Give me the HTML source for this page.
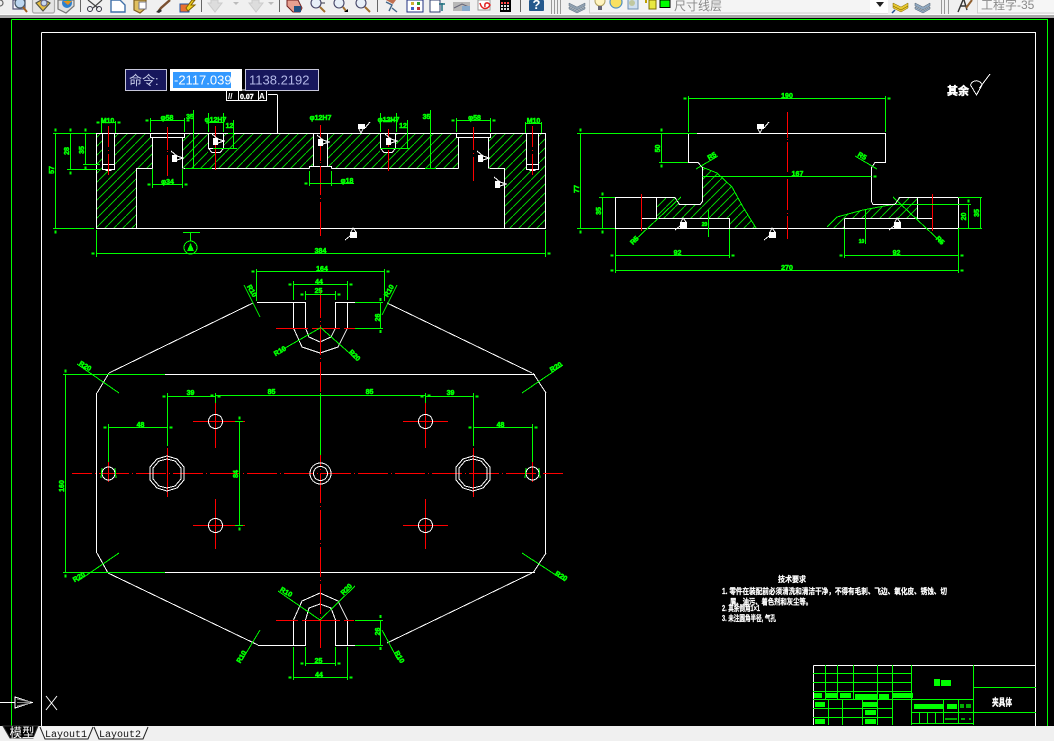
<!DOCTYPE html>
<html><head><meta charset="utf-8"><title>CAD</title>
<style>
html,body{margin:0;padding:0;background:#000;width:1054px;height:741px;overflow:hidden}
svg{display:block}
text{font-family:"Liberation Sans","Noto Sans CJK SC",sans-serif}
.t{fill:#0f0;font-size:7px;font-weight:bold;stroke:#0f0;stroke-width:.55;text-anchor:middle}
.g{stroke:#0f0;fill:none}
.w{stroke:#fff;fill:none}
.r{stroke:#f00;fill:none}
.n{fill:#fff;font-weight:bold;stroke:#fff;stroke-width:.25;font-size:8px}
</style></head><body>
<svg xmlns="http://www.w3.org/2000/svg" width="1054" height="741" viewBox="0 0 1054 741">
<defs>
<pattern id="h" patternUnits="userSpaceOnUse" width="9" height="9"><path d="M0 9L9 0" stroke="#00c800" stroke-width="1" shape-rendering="crispEdges"/></pattern>
<marker id="m" markerUnits="userSpaceOnUse" markerWidth="8" markerHeight="4" refX="0" refY="2" orient="auto-start-reverse"><rect x="2" y="1" width="3" height="2" fill="#0f0"/></marker>
<g id="r1" shape-rendering="crispEdges"><rect x="-2" y="-3" width="5" height="7" fill="#fff"/><path d="M-3-7L3-2L9 0L3 2" fill="none" stroke="#fff"/></g>
<g id="r2" shape-rendering="crispEdges"><rect x="-3" y="-3" width="7" height="5" fill="#fff"/><path d="M-2 2L0 6L2 2M4 1L9-5" fill="none" stroke="#fff"/></g>
<g id="r3" shape-rendering="crispEdges"><rect x="-3" y="-3" width="7" height="6" fill="#fff"/><path d="M-2-3L0-7L3-3M-3 1L-8 5" fill="none" stroke="#fff"/></g>
</defs>
<rect width="1054" height="741" fill="#000"/>

<!-- toolbar -->
<rect width="1054" height="15" fill="#f0f0f0"/>
<rect y="14" width="1054" height="1" fill="#fafafa"/>
<rect y="15" width="1054" height="3" fill="#a8a8a8"/>
<g fill="none" stroke-width="1.2">
<circle cx="0" cy="3" r="3" stroke="#666"/>
<path d="M13 0h12v9h-12z" fill="#f8f8ff" stroke="#557"/><circle cx="20" cy="3" r="5" fill="#bcd6f0" stroke="#456"/><path d="M23 7l4 5" stroke="#a06020" stroke-width="2"/>
<rect x="32.5" y="-2" width="22" height="15" rx="2" fill="#e4e4e4" stroke="#aaa"/><path d="M36 3l7-4 7 4-7 8z" fill="#e8c040" stroke="#554"/><circle cx="44" cy="3" r="3" fill="#c8d8f0" stroke="#668"/>
<path d="M58 0h16v6l-8 7-8-4z" fill="#e0e0e0" stroke="#777"/><circle cx="67" cy="3" r="5" fill="#2a80d0"/><path d="M63 1l5 4 4-4" fill="#e09020"/><circle cx="68" cy="-1" r="2" fill="#40b040"/>
</g>
<g shape-rendering="crispEdges"><rect x="80" y="0" width="1" height="12" fill="#666"/><rect x="201" y="0" width="1" height="12" fill="#666"/><rect x="279" y="0" width="1" height="12" fill="#666"/><rect x="377" y="0" width="1" height="12" fill="#666"/><rect x="520" y="0" width="1" height="12" fill="#666"/></g>
<path d="M88 0l10 8M102 0l-9 8" stroke="#444" fill="none" stroke-width="1.2"/><circle cx="90" cy="9" r="2.5" fill="none" stroke="#334"/><circle cx="99" cy="9" r="2.5" fill="none" stroke="#334"/>
<path d="M111 0h9l5 5v7h-14z" fill="#fff" stroke="#4070a8" stroke-width="1.4"/>
<path d="M134 0h12v8l-6 5-6-3z" fill="#e0c060" stroke="#806020" stroke-width="1.2"/><path d="M139 2h7v7h-7z" fill="#fff" stroke="#778"/>
<path d="M158 12l3-4 9-8" stroke="#7a5030" stroke-width="2.4" fill="none"/><path d="M156 12l4-3 2 2-3 2z" fill="#333"/>
<rect x="180" y="4" width="9" height="8" fill="#e87030" stroke="#2050a0"/><path d="M186 8l6-8h3l-4 5h4l-7 6z" fill="#f0d020" stroke="#806000"/>
<path d="M211 0h7v3h4l-7 9-7-9h3z" fill="#ddd" stroke="#ccc"/><path d="M233 2h6l-3 3z" fill="#bbb"/><path d="M252 0h7v3h4l-7 9-7-9h3z" fill="#ddd" stroke="#ccc"/><path d="M268 2h6l-3 3z" fill="#bbb"/>
<path d="M287 0h11l4 8-2 4h-7l-6-6z" fill="#e8a090" stroke="#702020"/><rect x="294" y="6" width="7" height="6" fill="#205080"/>
<g fill="#e8f0f8" stroke="#446" stroke-width="1.1">
<circle cx="316" cy="3" r="5"/><circle cx="339" cy="3" r="5"/><circle cx="361" cy="3" r="5"/>
</g>
<path d="M320 7l5 5M343 7l3 4M365 7l5 5" stroke="#a07030" stroke-width="2"/><path d="M344 12h4v-3z" fill="#000"/><path d="M321 3h4" stroke="#334"/>
<path d="M386 2l6 3-3 6M392 8l5 4" stroke="#468" fill="none" stroke-width="1.4"/><path d="M386 0h10l-3 4z" fill="#c07050"/>
<rect x="407" y="0" width="16" height="12" fill="#fff" stroke="#203080"/><rect x="411" y="2" width="3" height="3" fill="#d0b030"/><rect x="417" y="2" width="3" height="3" fill="#30a030"/><rect x="411" y="7" width="3" height="3" fill="#4060c0"/><rect x="417" y="7" width="3" height="3" fill="#c03030"/>
<rect x="430" y="0" width="10" height="12" fill="#fff" stroke="#304070"/><path d="M442 3v8M439 4h6" stroke="#207080" fill="none" stroke-width="1.5"/>
<rect x="453" y="2" width="17" height="9" fill="#b8b8b8"/><path d="M454 8l8-4 7 3" stroke="#667" fill="none"/><rect x="462" y="6" width="8" height="5" fill="#88aacc"/>
<path d="M478 0h12v10h-12z" fill="#fff" stroke="#999"/><path d="M480 3c2 8 8 6 10 2-2-3-6-3-5 2" stroke="#e02020" fill="none" stroke-width="1.5"/>
<rect x="500" y="0" width="11" height="12" fill="#000"/><g fill="#f44" shape-rendering="crispEdges"><rect x="501" y="2" width="2" height="2"/><rect x="504" y="2" width="2" height="2"/><rect x="507" y="2" width="2" height="2"/></g><g fill="#ddd" shape-rendering="crispEdges"><rect x="501" y="5" width="2" height="2"/><rect x="504" y="5" width="2" height="2"/><rect x="507" y="5" width="2" height="2"/><rect x="501" y="8" width="2" height="2"/><rect x="504" y="8" width="2" height="2"/><rect x="507" y="8" width="2" height="2"/></g>
<rect x="529" y="0" width="15" height="11" rx="1" fill="#24588c"/><text x="536.5" y="9" font-size="13" font-weight="bold" fill="#fff" text-anchor="middle">?</text>
<path d="M551.5 0v14M554.5 0v14M557.5 0v14M560.5 0v14" stroke="#999" shape-rendering="crispEdges"/>
<path d="M569 3l8 4 8-4v3l-8 4-8-4zM569 7l8 4 8-4v2l-8 4-8-4z" fill="#90a0b0" stroke="#607080" stroke-width=".5"/>
<rect x="589.5" y="-2" width="298" height="15" fill="#f4f4f4" stroke="#d0d0d0"/>
<rect x="870" y="0" width="18" height="13" fill="#fff"/>
<path d="M876 2h8l-4 5z" fill="#222"/>
<circle cx="600" cy="1" r="5" fill="#fff4c0" stroke="#b0a060"/><rect x="598" y="6" width="4" height="4" fill="#667"/>
<circle cx="616" cy="2" r="6" fill="#f8e060" stroke="#5090c0" stroke-width="1.2"/>
<rect x="628" y="-1" width="10" height="10" fill="#d0e0f0" stroke="#7090b0"/><circle cx="632" cy="3" r="3" fill="#c0c8a0"/>
<path d="M645 0h2v3h-2z" fill="#c0a000"/><rect x="649" y="0" width="7" height="9" fill="#e8e840" stroke="#807000"/>
<rect x="660" y="0" width="10" height="7.5" fill="#0f0" stroke="#000"/>
<text x="674" y="10" font-size="12" fill="#8a8a8a" letter-spacing="0">尺寸线层</text>
<path d="M893 3l8 4 7-4v3l-7 4-8-4zM893 6l8 4 7-4v2l-7 4-8-4z" fill="#e8c830" stroke="#806800" stroke-width=".5"/><path d="M892 13l3-3" stroke="#205090" stroke-width="1.5"/>
<path d="M915 3l8 4 7-4v3l-7 4-8-4zM915 7l8 4 7-4v2l-7 4-8-4z" fill="#90a8c0" stroke="#506070" stroke-width=".5"/>
<path d="M941.5 0v14M944.5 0v14M948.5 0v14" stroke="#999" shape-rendering="crispEdges"/>
<rect x="977.5" y="-2" width="77" height="15" fill="#f6f6f6" stroke="#d0d0d0"/>
<path d="M958 12l5-12M964 0l3 10M960 6h6" stroke="#333" stroke-width="1.4" fill="none"/><path d="M966 8l6-8" stroke="#906030" stroke-width="2"/>
<text x="981" y="9" font-size="12" fill="#8a8a8a">工程字-35</text>

<g shape-rendering="crispEdges" stroke-width="1">
<path class="g" d="M11.5 19.5H1047.5V726M11.5 19.5V726"/>
<path class="w" d="M41.5 32.5H1035.5V726M41.5 32.5V726"/>

<!-- FRONT VIEW -->
<path fill="url(#h)" d="M97 133H546V228H504V168H489V137H491V133H456V137H458V168H332V166H328V133H313V166H309V168H183V137H185V133H150V137H152V168H136V228H97Z"/>
<g fill="#000"><rect x="102" y="133" width="13" height="37"/><rect x="526" y="133" width="13" height="37"/><rect x="208" y="133" width="16" height="20"/><rect x="380" y="133" width="16" height="20"/></g>
<path class="w" d="M96.5 133.5H545.5V228.5H96.5ZM136.5 228.5V168.5H152.5M183.5 168.5H309.5M331.5 168.5H458.5M489.5 168.5H504.5V228.5M102.5 133.5V164.5H114.5V133.5M102.5 164.5V169.5H114.5V164.5M105.5 170.5H111.5M526.5 133.5V164.5H538.5V133.5M526.5 164.5V169.5H538.5V164.5M529.5 170.5H535.5M150.5 133.5V137.5H184.5V133.5M152.5 137.5V168.5M182.5 137.5V168.5M456.5 133.5V137.5H490.5V133.5M458.5 137.5V168.5M488.5 137.5V168.5M208.5 133.5V148.5H223.5V133.5M380.5 133.5V148.5H395.5V133.5M313.5 133.5V166.5H327.5V133.5M309.5 168.5V166.5H331.5V168.5"/>
<path class="w" d="M208.5 148.5L212 152.5H220L223.5 148.5M380.5 148.5L384 152.5H392L395.5 148.5M277.5 95V133M268 94.5H277.5"/>
<path class="r" d="M108.5 126V147M108.5 150V151M108.5 154V175M167.5 127V150M167.5 151V152M167.5 155V176M215.5 126V148M215.5 149V170M320.5 125V161M320.5 162V163M320.5 166V195M320.5 198V199M320.5 202V236M388.5 129V147M388.5 150V171M473.5 127V150M473.5 153V154M473.5 157V181M532.5 126V147M532.5 150V151M532.5 154V175"/>
<g class="g">
<path d="M53 133.5H96M53 228.5H94M67 169.5H100M83 164.5H100M55.5 134V228" />
<path d="M55.5 133.5V228.5" marker-start="url(#m)" marker-end="url(#m)"/>
<path d="M70.5 133.5V169.5" marker-start="url(#m)" marker-end="url(#m)"/>
<path d="M85.5 133.5V164.5" marker-start="url(#m)" marker-end="url(#m)"/>
<path d="M101.5 122.5H115.5" marker-start="url(#m)" marker-end="url(#m)"/><path d="M101.5 121V133M115.5 121V133"/>
<path d="M150.5 120.5H184.5" marker-start="url(#m)" marker-end="url(#m)"/><path d="M150.5 118V132M184.5 118V132"/>
<path d="M193.5 110V168M185 168.5H212"/>
<path d="M208.5 122.5H223.5"/><path d="M208.5 113V132M223.5 113V132"/>
<path d="M233.5 120V148M213 148.5H237M228 133.5H233"/>
<path d="M152.5 184.5H182.5" marker-start="url(#m)" marker-end="url(#m)"/><path d="M152.5 169V188M182.5 169V188"/>
<path d="M309.5 183.5H354" marker-start="url(#m)"/><path d="M309.5 171V186M331.5 171V186"/>
<path d="M380.5 120.5H396.5"/><path d="M380.5 113V132M396.5 113V132"/>
<path d="M407.5 120V148M380 148.5H410"/>
<path d="M430.5 110V168M425 168.5H436"/>
<path d="M456.5 120.5H490.5" marker-start="url(#m)" marker-end="url(#m)"/><path d="M456.5 118V132M490.5 118V132"/>
<path d="M525.5 123.5H541.5"/><path d="M525.5 122V133M541.5 122V133"/>
<path d="M96.5 253.5H545.5" marker-start="url(#m)" marker-end="url(#m)"/><path d="M96.5 230V257M545.5 230V257"/>
<path d="M183 232.5H200M190.5 232V241"/>
<circle cx="190.5" cy="247.5" r="6.5"/>
</g>
<path d="M190.5 243L194 251H187Z" fill="#0f0" stroke="none"/>
<!-- tolerance box -->
<path class="w" d="M226.5 90V100.5H266.5V90M238.5 90V100.5M258.5 90V100.5M240 90H268"/>

<!-- SIDE VIEW -->
<path fill="url(#h)" d="M702 167L717 173L732 187L743 207L756 228H729V218H656V197H675L679 204H700L702 201Z"/>
<path fill="url(#h)" d="M827 227L837 217L863 210L895 204L899 197H917V218H844V228H830Z"/>
<path class="g" d="M702 167L717 173L732 187L743 207L756 228M827 227L837 217L863 210L895 204"/>
<path class="w" d="M688.5 133.5H885.5V162.5H875L871.5 167.5V201.5L873 204.5H895L899.5 197.5H958.5V228.5H615.5V197.5H675L679.5 204.5H700L702.5 201.5V167.5L698 162.5H688.5V133.5M656.5 197.5V218.5M641 218.5H729.5V228M917.5 197.5V218.5M844.5 218.5H932.5M844.5 218.5V228"/>
<path class="r" d="M787.5 112V138M787.5 139V140M787.5 142V172M787.5 179V210M787.5 213V214M787.5 216V239M641.5 194V231M932.5 194V231"/>
<g class="g">
<path d="M688.5 98.5H885.5" marker-start="url(#m)" marker-end="url(#m)"/><path d="M688.5 96V132M885.5 96V132"/>
<path d="M577 133.5H697M577 228.5H615M659 162.5H688M599 197.5H615"/>
<path d="M580.5 133.5V228.5" marker-start="url(#m)" marker-end="url(#m)"/>
<path d="M661.5 133.5V162.5" marker-start="url(#m)" marker-end="url(#m)"/>
<path d="M702.5 176.5H871.5" marker-end="url(#m)"/>
<path d="M602.5 197.5V228.5" marker-start="url(#m)" marker-end="url(#m)"/>
<path d="M895 204.5H971M958 197.5H982M958 228.5H982"/>
<path d="M968.5 204.5V228.5" marker-start="url(#m)"/>
<path d="M980.5 197.5V228.5"/>
<path d="M615.5 255.5H729.5" marker-start="url(#m)" marker-end="url(#m)"/>
<path d="M844.5 255.5H958.5" marker-start="url(#m)" marker-end="url(#m)"/>
<path d="M615.5 270.5H958.5" marker-start="url(#m)" marker-end="url(#m)"/>
<path d="M615.5 229V273M729.5 229V258M844.5 229V258M958.5 229V273"/>
<path d="M708.5 210V237M865.5 210V244"/>
<path d="M718 156L696 169M855 156L877 169M634 241L681 197M942 243L893 197"/>
</g>

<!-- PLAN VIEW -->
<path class="w" d="M165 374.5H535M165 572.5H535M96.5 393V553M545.5 393V553"/>
<path class="w" d="M109 373L97 393M533 373L546 393M97 553L108 573M546 553L533 573"/>
<path class="w" d="M109 373L253 303M387 303L532 373M108 573L258 645M387 643L532 573"/>
<path class="w" d="M257 302.5H305.5V328L309 337L320 342L331 337L335.5 328V302.5H355M293.5 302.5V328L302 347L320 353L338 347L347.5 328V302.5"/>
<path class="w" d="M258 645.5H305.5V620L309 608L320 604L331 608L335.5 620V645.5H355M293.5 645.5V620L302 601L320 593L338 601L347.5 620V645.5"/>
<path class="r" d="M320.5 290V648" stroke-dasharray="30 3 1 3" stroke-dashoffset="2"/>
<path class="r" d="M72 473.5H563" stroke-dasharray="30 3 1 3" stroke-dashoffset="10"/>
<path class="r" d="M276 328.5H308M312 328.5H340M344 328.5H355M276 620.5H298M302 620.5H340M344 620.5H354"/>
<path class="r" d="M193 421.5H245M215.5 403V448M403 421.5H448M425.5 403V448M193 525.5H245M215.5 499V549M403 525.5H448M425.5 499V549M108.5 462V482M532.5 462V482M167.5 448V497M473.5 448V497"/>
<g class="w">
<circle cx="108.5" cy="473.5" r="6.5"/><circle cx="532.5" cy="473.5" r="6.5"/>
<circle cx="215.5" cy="421.5" r="7"/><circle cx="425.5" cy="421.5" r="7"/><circle cx="215.5" cy="525.5" r="7"/><circle cx="425.5" cy="525.5" r="7"/>
<circle cx="320.5" cy="473.5" r="10.5"/><circle cx="320.5" cy="473.5" r="7"/>
<path d="M167 456L177 459L184 467V480L177 488L167 491L157 488L150 480V467L157 459Z"/><path d="M167 459L175 461L181 468V479L175 486L167 488L159 486L153 479V468L159 461Z"/>
<path d="M473 456L483 459L490 467V480L483 488L473 491L463 488L456 480V467L463 459Z"/><path d="M473 459L481 461L487 468V479L481 486L473 488L465 486L459 479V468L465 461Z"/>
</g>
<g class="g">
<path d="M102 468L101 478M115 468L116 478M526 468L525 478M539 468L540 478"/>
<path d="M63 374.5H165M63 572.5H165"/>
<path d="M65.5 374.5V572.5" marker-start="url(#m)" marker-end="url(#m)"/>
<path d="M167.5 396.5H215.5" marker-start="url(#m)" marker-end="url(#m)"/>
<path d="M215.5 395.5H425.5" marker-start="url(#m)" marker-end="url(#m)"/>
<path d="M425.5 396.5H473.5" marker-start="url(#m)" marker-end="url(#m)"/>
<path d="M167.5 393V446M215.5 393V403M320.5 393V455M425.5 393V403M473.5 393V446"/>
<path d="M108.5 427.5H167.5" marker-start="url(#m)" marker-end="url(#m)"/>
<path d="M473.5 427.5H532.5" marker-start="url(#m)" marker-end="url(#m)"/>
<path d="M108.5 424V462M532.5 424V462"/>
<path d="M239.5 421.5V525.5" marker-start="url(#m)" marker-end="url(#m)"/><path d="M235 421.5H243M235 525.5H243"/>
<path d="M256.5 271.5H384.5" marker-start="url(#m)" marker-end="url(#m)"/><path d="M256.5 269V301M384.5 269V301"/>
<path d="M293.5 284.5H347.5" marker-start="url(#m)" marker-end="url(#m)"/><path d="M293.5 281V300M347.5 281V300"/>
<path d="M305.5 294.5H335.5" marker-start="url(#m)" marker-end="url(#m)"/><path d="M305.5 291V300M335.5 291V300"/>
<path d="M380.5 303V328" marker-start="url(#m)" marker-end="url(#m)"/><path d="M355 302.5H383M355 328.5H383"/>
<path d="M244 285L260 317M397 285L382 315M280 351L320 328M320 327L355 358M77 364L119 393M563 365L522 393M78 581L119 553M565 581L522 553M355 586L320 620M278 591L320 620M382 630L398 660M260 630L242 660"/>
<path d="M380.5 620V645" marker-start="url(#m)" marker-end="url(#m)"/><path d="M355 620.5H383M355 645.5H383"/>
<path d="M305.5 663.5H335.5" marker-start="url(#m)" marker-end="url(#m)"/><path d="M305.5 647V666M335.5 647V666"/>
<path d="M293.5 677.5H347.5" marker-start="url(#m)" marker-end="url(#m)"/><path d="M293.5 647V680M347.5 647V680"/>
</g>

<!-- TITLE BLOCK -->
<path class="w" d="M813.5 665.5H1035.5M813.5 665.5V725"/>
<path class="g" d="M813 673.5H911M813 682.5H911M813 691.5H911M813 699.5H973M813 708.5H892M813 717.5H892M825.5 665V699M837.5 665V699M853.5 665V699M877.5 665V725M892.5 665V725M911.5 665V725M828.5 699V725M842.5 699V725M862.5 699V725M973.5 665V725M973 687.5H1036M911 712.5H1036M911 723.5H973M943.5 699V723M958.5 699V723M919.5 712V723M927.5 712V723M935.5 712V723"/>
<g fill="#0f0">
<rect x="814" y="693" width="8" height="5"/><rect x="826" y="693" width="11" height="5"/><rect x="840" y="693" width="11" height="5"/><rect x="855" y="694" width="22" height="5"/><rect x="879" y="694" width="10" height="5"/><rect x="893" y="693" width="20" height="5"/>
<rect x="815" y="702" width="10" height="5"/><rect x="862" y="702" width="15" height="5"/><rect x="865" y="710" width="11" height="5"/><rect x="815" y="719" width="10" height="5"/><rect x="865" y="719" width="11" height="5"/>
<rect x="914" y="704" width="29" height="5"/><rect x="947" y="704" width="10" height="5"/>
<rect x="934" y="679" width="6" height="7"/><rect x="941" y="680" width="10" height="6"/>
</g>
<g fill="#0a0"><rect x="960" y="704" width="4" height="4"/><rect x="966" y="704" width="5" height="4"/><rect x="945" y="718" width="12" height="2"/><rect x="961" y="718" width="4" height="2"/><rect x="969" y="718" width="2" height="2"/></g>
</g>

<!-- rough symbols -->
<use href="#r1" x="174" y="158"/><use href="#r1" x="215" y="141"/><use href="#r1" x="320" y="142"/><use href="#r1" x="388" y="141"/><use href="#r1" x="480" y="158"/><use href="#r1" x="497" y="184"/>
<use href="#r2" x="361" y="127"/><use href="#r3" x="353" y="235"/>
<use href="#r2" x="760" y="127"/><use href="#r3" x="683" y="225"/><use href="#r3" x="772" y="235"/><use href="#r3" x="897" y="225"/>
<path d="M970.5 85L976.5 95L982 85A6 6 0 0 0 970.5 85ZM979.5 88L990 74" fill="none" stroke="#fff" stroke-width="1" shape-rendering="crispEdges"/>
<text x="947" y="94.5" font-size="11" font-weight="bold" fill="#fff" stroke="#fff" stroke-width=".5" textLength="22" lengthAdjust="spacingAndGlyphs">其余</text>

<!-- dim labels -->
<g class="t">
<text x="107.5" y="123">M10</text>
<text x="167" y="120">φ58</text><text x="474.5" y="120">φ58</text>
<text x="215.5" y="122">φ12H7</text><text x="388.5" y="122">φ12H7</text><text x="320.5" y="120">φ12H7</text>
<text x="533.5" y="123">M10</text>
<text x="167.5" y="184">φ34</text><text x="347" y="183">φ18</text>
<text x="320.5" y="253">384</text>
<text transform="translate(54,170) rotate(-90)">57</text>
<text transform="translate(69,151) rotate(-90)">28</text>
<text transform="translate(84,150) rotate(-90)">35</text>
<text x="190" y="119">35</text>
<text x="229.5" y="128">12</text>
<text x="403" y="128">12</text>
<text x="426.5" y="119">35</text>
<text x="787" y="98">190</text><text x="797.5" y="176">167</text>
<text transform="translate(579,189) rotate(-90)">77</text>
<text transform="translate(660,148.5) rotate(-90)">50</text>
<text transform="translate(601,211) rotate(-90)">35</text>
<text transform="translate(966,216.5) rotate(-90)">20</text>
<text transform="translate(979,213) rotate(-90)">35</text>
<text x="677.5" y="255">92</text><text x="896.5" y="255">92</text><text x="787" y="270">270</text>
<text x="704.5" y="226" style="font-size:5px">20</text><text x="861.5" y="243" style="font-size:5px">10</text>
<text transform="translate(713,158) rotate(-30)">R5</text><text transform="translate(861,158) rotate(30)">R5</text>
<text transform="translate(636,242) rotate(-45)">R5</text><text transform="translate(938.5,242) rotate(45)">R5</text>
<text x="322" y="271">164</text><text x="319" y="284">44</text><text x="318.5" y="293">25</text>
<text transform="translate(250,292) rotate(60)">R10</text><text transform="translate(391,292) rotate(-60)">R10</text>
<text transform="translate(281,353) rotate(-30)">R10</text><text transform="translate(353,357) rotate(45)">R20</text>
<text transform="translate(84,368) rotate(30)">R20</text><text transform="translate(557,369) rotate(-30)">R20</text>
<text transform="translate(80,579) rotate(-30)">R20</text><text transform="translate(560,578) rotate(30)">R20</text>
<text x="190.5" y="395">39</text><text x="271.5" y="394">85</text><text x="369.5" y="394">85</text><text x="450.5" y="395">39</text>
<text x="140.5" y="427">48</text><text x="500.5" y="427">48</text>
<text transform="translate(64,486) rotate(-90)">160</text>
<text transform="translate(238,474) rotate(-90)">84</text>
<text transform="translate(380,317.5) rotate(-90)">26</text>
<text transform="translate(380,631.5) rotate(-90)">26</text>
<text transform="translate(285,594) rotate(30)">R10</text><text transform="translate(348,591) rotate(-45)">R20</text>
<text transform="translate(243.5,658) rotate(-60)">R10</text><text transform="translate(397.5,658) rotate(60)">R10</text>
<text x="318.5" y="663">25</text><text x="319" y="677">44</text>
</g>

<!-- notes -->
<text x="778" y="582" class="n" textLength="28" lengthAdjust="spacingAndGlyphs" font-size="9">技术要求</text>
<text x="722" y="594" class="n" textLength="225" lengthAdjust="spacingAndGlyphs">1. 零件在装配前必须清洗和清洁干净，不得有毛刺、飞边、氧化皮、锈蚀、切</text>
<text x="730" y="604.5" class="n" textLength="82" lengthAdjust="spacingAndGlyphs">屑、油污、着色剂和灰尘等。</text>
<text x="722" y="611" class="n" textLength="38" lengthAdjust="spacingAndGlyphs">2. 其余倒角1×1</text>
<text x="722" y="621" class="n" textLength="54" lengthAdjust="spacingAndGlyphs">3. 未注圆角半径, 气孔</text>
<text x="992" y="706" font-size="10" font-weight="bold" fill="#fff" stroke="#fff" stroke-width=".3" textLength="20" lengthAdjust="spacingAndGlyphs">夹具体</text>

<!-- UCS -->
<path d="M0 702.5H15M15 697L32 702.5L15 708Z" fill="none" stroke="#fff" shape-rendering="crispEdges"/>
<path d="M17 699L30 702M17 702.5H30M17 706L30 703" stroke="#888" fill="none"/>
<path d="M46 696L57 710M57 696L46 710" stroke="#fff" fill="none" stroke-width="1"/>

<!-- command inputs -->
<rect x="125.5" y="69.5" width="41" height="21" fill="#17175c" stroke="#c6c6da"/>
<text x="129" y="85" font-size="13" fill="#c6cbe8">命令:</text>
<rect x="170" y="69" width="72" height="22" fill="#fff"/>
<rect x="173" y="72" width="58" height="16" fill="#3399ff"/>
<text x="174" y="84.5" font-size="13" fill="#fff">-2117.039</text>
<rect x="245.5" y="69.5" width="73" height="21" fill="#17175c" stroke="#c6c6da"/>
<text x="249" y="84.5" font-size="13" fill="#b4b9e8">1138.2192</text>
<text x="228" y="99" font-size="8" font-weight="bold" fill="#fff">//</text>
<text x="240" y="99" font-size="7" font-weight="bold" fill="#fff" stroke="#fff" stroke-width=".4">0.07</text>
<text x="259" y="99" font-size="8" font-weight="bold" fill="#fff">A</text>

<!-- tabs -->
<rect y="726" width="1054" height="15" fill="#f0f0f0"/>
<path d="M3 726L10 738H33L38 726Z" fill="#000" stroke="#333"/>
<text x="9.5" y="737" font-size="12.5" fill="#fff" font-family="Liberation Sans,Noto Sans CJK SC,sans-serif">模型</text>
<path d="M40 727L45 739H88L93 727" fill="#f4f4f4" stroke="#222"/>
<path d="M94 727L99 739H143L148 727" fill="#f4f4f4" stroke="#222"/>
<text x="45" y="737" font-size="10" fill="#111" style="font-family:'Liberation Mono',monospace">Layout1</text>
<text x="99" y="737" font-size="10" fill="#111" style="font-family:'Liberation Mono',monospace">Layout2</text>
</svg>
</body></html>
